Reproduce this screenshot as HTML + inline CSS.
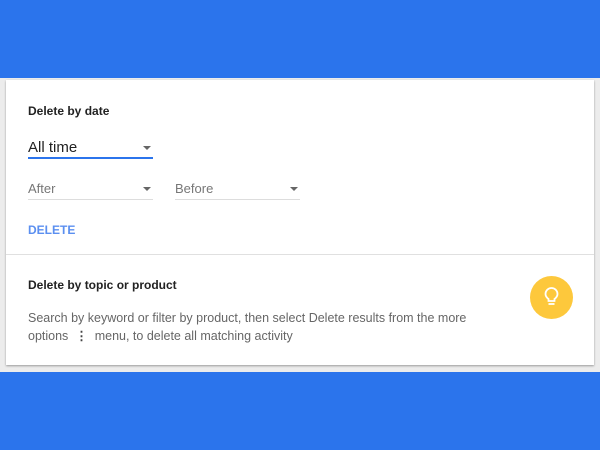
<!DOCTYPE html>
<html><head><style>
body{margin:0;width:600px;height:450px;background:#2b74ec;font-family:"Liberation Sans",Arial,sans-serif;position:relative;overflow:hidden}
.grey{position:absolute;left:0;top:78px;width:600px;height:294px;background:#ececec}
.card{position:absolute;left:6px;top:80px;width:588px;height:285px;background:#fff;box-shadow:0 1px 2px rgba(0,0,0,.35)}
.t{position:absolute;font-size:12px;font-weight:bold;color:#222}
.sel{position:absolute;border-bottom:1px solid #ddd;color:#777;font-size:13px}
.arr{position:absolute;right:2px;top:6px;width:0;height:0;border-left:4px solid transparent;border-right:4px solid transparent;border-top:4px solid #666}
.sep{position:absolute;left:0;top:174px;width:588px;height:1px;background:#e0e0e0}
</style></head><body>
<div class="grey"></div>
<div class="card">
<div class="t" style="left:22px;top:24px">Delete by date</div>
<div class="sel" style="left:22px;top:59px;width:125px;height:18px;font-size:15px;color:#222;border-bottom:2px solid #2b74ec">All time<div class="arr" style="top:7px"></div></div>
<div class="sel" style="left:22px;top:101px;width:125px;height:18px">After<div class="arr"></div></div>
<div class="sel" style="left:169px;top:101px;width:125px;height:18px">Before<div class="arr"></div></div>
<div style="position:absolute;left:22px;top:143px;font-size:12px;font-weight:bold;color:#5b8ff0">DELETE</div>
<div class="sep"></div>
<div class="t" style="left:22px;top:198px">Delete by topic or product</div>
<div style="position:absolute;left:22px;top:229px;font-size:12.5px;line-height:18px;color:#666;width:460px">Search by keyword or filter by product, then select Delete results from the more options &nbsp;<b style="color:#444">⋮</b>&nbsp; menu, to delete all matching activity</div>
<div style="position:absolute;left:524px;top:196px;width:43px;height:43px;border-radius:50%;background:#fdc83c">
<svg width="43" height="43" viewBox="0 0 43 43"><path d="M18.5 25 v-2 c-2-1.5-3-3-3-5 a6 6 0 0 1 12 0 c0 2-1 3.5-3 5 v2 z" fill="none" stroke="#fff" stroke-width="1.8"/><line x1="18.5" y1="28" x2="24.5" y2="28" stroke="#fff" stroke-width="1.8"/></svg>
</div>
</div>
</body></html>
